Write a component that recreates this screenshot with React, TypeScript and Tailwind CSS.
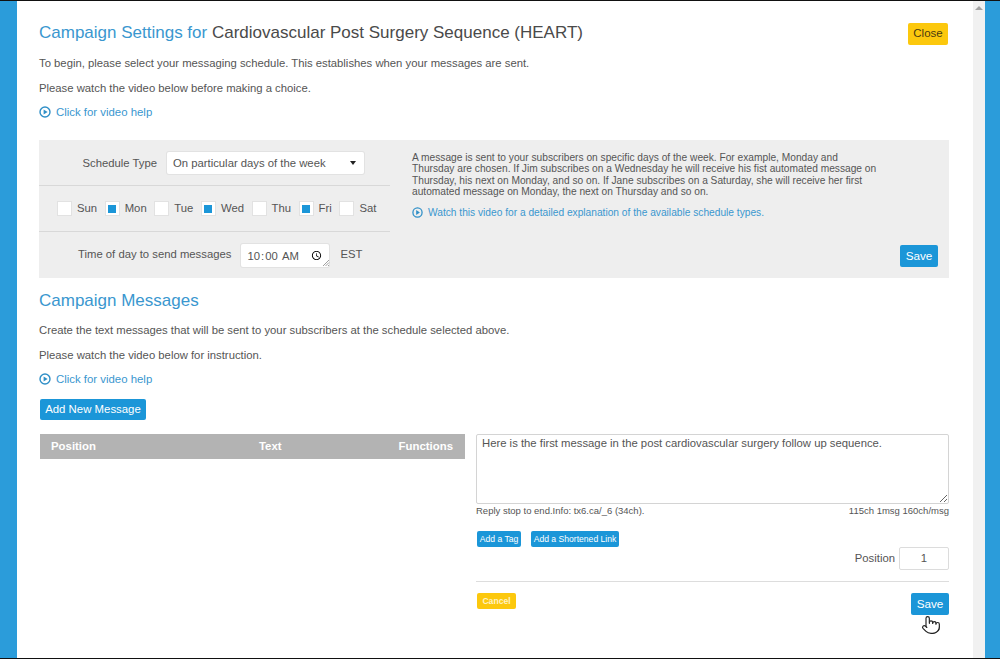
import { Pointer } from "lucide-react";

const days = [
  { label: "Sun", on: false },
  { label: "Mon", on: true },
  { label: "Tue", on: false },
  { label: "Wed", on: true },
  { label: "Thu", on: false },
  { label: "Fri", on: true },
  { label: "Sat", on: false },
];

function PlayIcon({ size = 12 }: { size?: number }) {
  return (
    <svg width={size} height={size} viewBox="0 0 12 12" className="shrink-0 text-[#2f8fc7]">
      <circle cx="6" cy="6" r="5" fill="none" stroke="currentColor" strokeWidth="1.4" />
      <path d="M4.6 3.4 8.6 6 4.6 8.6Z" fill="currentColor" />
    </svg>
  );
}

function VideoLink({ text, className = "" }: { text: string; className?: string }) {
  return (
    <a className={`flex items-center gap-[5px] text-[11.4px] leading-[16px] text-[#3a97cf] ${className}`}>
      <PlayIcon />
      {text}
    </a>
  );
}

function Blue({ children, className = "" }: { children: React.ReactNode; className?: string }) {
  return (
    <button className={`whitespace-nowrap rounded-[2px] bg-[#1b96d8] text-center text-white ${className}`}>
      {children}
    </button>
  );
}

export default function App() {
  return (
    <div className="flex h-[659px] w-[1000px] overflow-hidden border-y border-[#111] bg-white font-['Liberation_Sans',Arial,sans-serif] text-[#555]">
      <div className="w-[17px] shrink-0 bg-[#2b9cda]" />

      <main className="relative flex-1 pt-[21px] pl-[22px] pr-[24px]">
        <div className="flex items-start justify-between">
          <h1 className="pt-[1px] text-[17px] leading-[20px] text-[#3a97cf]">
            Campaign Settings for <span className="text-[#4a4a4a]">Cardiovascular Post Surgery Sequence (HEART)</span>
          </h1>
          <button className="mt-[1px] mr-[1px] h-[22px] w-[40px] rounded-[2px] bg-[#fcc80d] text-[11.5px] text-[#4a3b10]">Close</button>
        </div>

        <p className="mt-[10px] text-[11.3px] leading-[16px]">
          To begin, please select your messaging schedule. This establishes when your messages are sent.
        </p>
        <p className="mt-[9px] text-[11.3px] leading-[16px]">Please watch the video below before making a choice.</p>
        <VideoLink text="Click for video help" className="mt-[8px]" />

        <section className="mt-[20px] flex h-[138px] bg-[#eeeeee]">
          <div className="w-[351px] shrink-0">
            <div className="flex h-[46px] items-center border-b border-[#d8d8d8] pt-[1px]">
              <label className="w-[118px] text-right text-[11.3px]">Schedule Type</label>
              <div className="ml-[10px] flex h-[22px] w-[197px] items-center justify-between rounded-[2px] bg-white pl-[6px] pr-[8px] text-[11.3px] shadow-[0_0_0_1px_#e2e2e2]">
                On particular days of the week
                <span className="h-0 w-0 border-x-[3px] border-t-[4px] border-x-transparent border-t-[#222]" />
              </div>
            </div>
            <div className="flex h-[46px] items-center gap-[8.6px] border-b border-[#d8d8d8] pl-[19px]">
              {days.map((d) => (
                <label key={d.label} className="flex items-center gap-[6px] text-[11.3px]">
                  <span className="flex size-[13px] items-center justify-center bg-white shadow-[0_0_0_1px_#e2e2e2]">
                    {d.on && <span className="size-[8px] bg-[#1b96d8]" />}
                  </span>
                  {d.label}
                </label>
              ))}
            </div>
            <div className="flex h-[44px] items-center">
              <label className="ml-[39px] text-[11.3px]">Time of day to send messages</label>
              <div className="relative ml-[10px] h-[23px] w-[88px]">
                <input
                  type="time"
                  defaultValue="10:00"
                  className="h-full w-full rounded-[2px] bg-white pl-[5px] pr-[4px] text-[11.3px] text-[#555] shadow-[0_0_0_1px_#e2e2e2]"
                />
                <svg width="8" height="8" viewBox="0 0 8 8" className="absolute bottom-[-1px] right-[-1px] text-[#888]">
                  <path d="M1 7 7 1M3.5 7 7 3.5M6 7 7 6" stroke="currentColor" strokeWidth="0.8" />
                </svg>
              </div>
              <span className="ml-[11px] text-[11.3px]">EST</span>
            </div>
          </div>

          <div className="relative flex-1 pl-[22px] pt-[12px]">
            <p className="w-[470px] text-[10.2px] leading-[11.4px]">
              A message is sent to your subscribers on specific days of the week. For example, Monday and
              <br />
              Thursday are chosen. If Jim subscribes on a Wednesday he will receive his fist automated message on
              <br />
              Thursday, his next on Monday, and so on. If Jane subscribes on a Saturday, she will receive her first
              <br />
              automated message on Monday, the next on Thursday and so on.
            </p>
            <a className="mt-[8px] flex items-center gap-[5px] text-[10.2px] leading-[14px] text-[#3a97cf]">
              <PlayIcon size={11} />
              Watch this video for a detailed explanation of the available schedule types.
            </a>
            <Blue className="absolute bottom-[11px] right-[11px] h-[22px] w-[38px] text-[11.7px]">Save</Blue>
          </div>
        </section>

        <h2 className="mt-[13px] text-[17px] leading-[20px] text-[#3a97cf]">Campaign Messages</h2>
        <p className="mt-[11px] text-[11.3px] leading-[16px]">
          Create the text messages that will be sent to your subscribers at the schedule selected above.
        </p>
        <p className="mt-[9px] text-[11.3px] leading-[16px]">Please watch the video below for instruction.</p>
        <VideoLink text="Click for video help" className="mt-[8px]" />

        <Blue className="mt-[12px] ml-[1px] block h-[21px] w-[106px] text-[11.4px]">Add New Message</Blue>

        <div className="mt-[14px] flex gap-[11px]">
          <div className="ml-[1px] flex h-[25px] w-[425px] shrink-0 items-center justify-between bg-[#b3b3b3] px-[11px] pr-[12px] text-[11.4px] font-bold text-white">
            <span>Position</span>
            <span className="ml-[46px]">Text</span>
            <span>Functions</span>
          </div>

          <div className="flex-1">
            <textarea
              readOnly
              defaultValue="Here is the first message in the post cardiovascular surgery follow up sequence."
              className="block h-[70px] w-full rounded-[2px] border border-[#d4d4d4] px-[5px] pt-[1px] text-[11.3px] leading-[15px] text-[#555]"
            />
            <div className="mt-[1px] flex justify-between text-[9.5px] leading-[12px]">
              <span>Reply stop to end.Info: tx6.ca/_6 (34ch).</span>
              <span>115ch 1msg 160ch/msg</span>
            </div>
            <div className="mt-[14px] flex gap-[10px] pl-[1px]">
              <Blue className="h-[16px] w-[44px] text-[8.6px]">Add a Tag</Blue>
              <Blue className="h-[16px] w-[88px] text-[8.6px]">Add a Shortened Link</Blue>
            </div>
            <div className="flex items-center justify-end gap-[4px]">
              <span className="text-[11.3px]">Position</span>
              <div className="flex h-[23px] w-[50px] items-center justify-center rounded-[2px] border border-[#dcdcdc] text-[11.3px]">1</div>
            </div>
            <div className="mt-[11px] border-t border-[#dddddd]" />
            <div className="mt-[11px] flex items-start justify-between">
              <button className="ml-[1px] h-[16px] w-[39px] rounded-[2px] bg-[#fcc80d] text-[8.6px] font-semibold text-[#fff3c4]">Cancel</button>
              <Blue className="h-[22px] w-[38px] text-[11.7px]">Save</Blue>
            </div>
          </div>
        </div>

        <Pointer size={20} strokeWidth={1.4} className="absolute left-[904px] top-[614px] fill-white text-[#222]" />
      </main>

      <div className="flex w-[12px] shrink-0 justify-center bg-[#f1f1f1] pt-[5px]">
        <span className="h-0 w-0 border-x-[4px] border-b-[4px] border-x-transparent border-b-[#a3a3a3]" />
      </div>
      <div className="w-[15px] shrink-0 bg-[#2b9cda]" />
    </div>
  );
}
